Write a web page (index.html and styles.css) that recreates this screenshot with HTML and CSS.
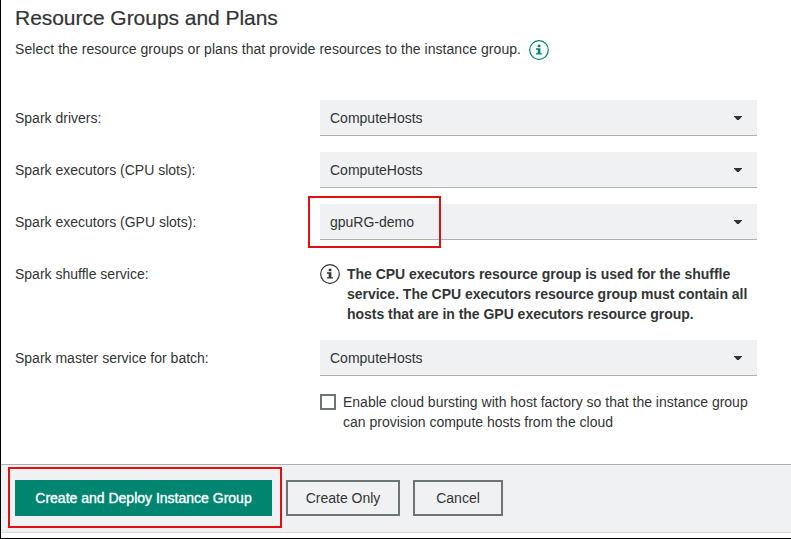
FILE: index.html
```html
<!DOCTYPE html>
<html lang="en">
<head>
<meta charset="utf-8">
<title>Resource Groups and Plans</title>
<link rel="stylesheet" href="styles.css">
</head>
<body>
<main class="page">
  <section class="content">
    <h1 class="title">Resource Groups and Plans</h1>
    <p class="intro"><span class="intro-text">Select the resource groups or plans that provide resources to the instance group.</span>
      <svg class="info info-green" viewBox="0 0 20 20"><circle cx="10" cy="10" r="9.3"/><path d="M8.7 4.7h2.7v2.5H8.7zM7 8.3h4.4v4.9H13v1.4H7v-1.4h1.7V9.7H7z"/></svg>
    </p>
    <div class="form">
      <div class="row"><span class="label">Spark drivers:</span><div class="select"><span>ComputeHosts</span><i class="caret"></i></div></div>
      <div class="row"><span class="label">Spark executors (CPU slots):</span><div class="select"><span>ComputeHosts</span><i class="caret"></i></div></div>
      <div class="row"><span class="label">Spark executors (GPU slots):</span><div class="select"><span>gpuRG-demo</span><i class="caret"></i><div class="mark mark-gpu"></div></div></div>
      <div class="row row-note"><span class="label">Spark shuffle service:</span>
        <div class="note">
          <svg class="info" viewBox="0 0 20 20"><circle cx="10" cy="10" r="9.3"/><path d="M8.7 4.7h2.7v2.5H8.7zM7 8.3h4.4v4.9H13v1.4H7v-1.4h1.7V9.7H7z"/></svg>
          <p class="note-text">The CPU executors resource group is used for the shuffle<br>service. The CPU executors resource group must contain all<br>hosts that are in the GPU executors resource group.</p>
        </div>
      </div>
      <div class="row"><span class="label">Spark master service for batch:</span><div class="select"><span>ComputeHosts</span><i class="caret"></i></div></div>
    </div>
    <div class="check"><span class="box"></span><p class="check-text">Enable cloud bursting with host factory so that the instance group<br>can provision compute hosts from the cloud</p></div>
  </section>
  <footer class="footer">
    <div class="deploy"><button class="btn primary">Create and Deploy Instance Group</button><div class="mark mark-deploy"></div></div>
    <button class="btn create">Create Only</button>
    <button class="btn cancel">Cancel</button>
  </footer>
</main>
</body>
</html>
```
FILE: styles.css
```css
* { box-sizing: border-box; }
body { margin: 0; background: #fff; color: #323535; font: 14px/20px "Liberation Sans", Arial, sans-serif; }
p, h1 { margin: 0; }
.page { height: 539px; border-left: 1px solid #000; border-bottom: 1px solid #000; overflow: hidden; }
.content { height: 464px; padding: 6px 34px 0 14px; }
.title { font-size: 21px; line-height: 24px; font-weight: 400; letter-spacing: -0.04px; white-space: nowrap; -webkit-text-stroke: 0.2px #323535; }
.intro { display: flex; align-items: center; gap: 8px; height: 20px; margin-top: 10px; white-space: nowrap; }
.intro-text { position: relative; top: -1px; letter-spacing: 0.05px; }
.info { flex: none; width: 20px; height: 20px; fill: #323535; }
.info circle { fill: none; stroke: #323535; stroke-width: 1.2; }
.info-green { fill: #008571; }
.info-green circle { stroke: #008571; }
.form { display: flex; flex-direction: column; gap: 16px; margin-top: 40px; }
.row { display: grid; grid-template-columns: 305px 437px; line-height: 36px; white-space: nowrap; }
.row-note { height: 68px; }
.select { position: relative; display: flex; align-items: center; justify-content: space-between; height: 36px; padding: 0 15px 0 10px; background: #f0f1f2; border-bottom: 1px solid #aeb1b3; }
.caret { width: 8px; height: 4px; margin-top: 1px; background: #323232; clip-path: polygon(0 0, 100% 0, 100% 15%, 60% 100%, 40% 100%, 0 15%); }
.note { display: flex; gap: 7px; padding-top: 8px; }
.note-text { font-weight: 700; line-height: 20px; letter-spacing: -0.02px; }
.check { display: flex; gap: 7px; margin: 16px 0 0 305px; white-space: nowrap; }
.box { flex: none; width: 16px; height: 16px; margin-top: 2px; border: 2px solid #6c7474; }
.footer { display: flex; align-items: flex-start; height: 69px; padding: 15px 0 0 14px; background: #f0f1f2; border-top: 1px solid #aeb1b3; border-bottom: 1px solid #d5d8d8; }
.btn { height: 36px; padding: 0; border: 2px solid #6c7474; border-radius: 0; background: #f0f1f2; color: #323535; font: 14px/20px "Liberation Sans", Arial, sans-serif; }
.deploy { position: relative; width: 257px; height: 36px; }
.primary { width: 257px; border: 0; background: #008571; color: #fff; -webkit-text-stroke: 0.35px #fff; }
.create { width: 114px; margin-left: 14px; }
.cancel { width: 90px; margin-left: 13px; }
.mark { position: absolute; border: 2px solid #e00f12; pointer-events: none; }
.mark-gpu { left: -12px; top: -8px; width: 133px; height: 52px; }
.mark-deploy { left: -7px; top: -13px; width: 274px; height: 61px; }
```
